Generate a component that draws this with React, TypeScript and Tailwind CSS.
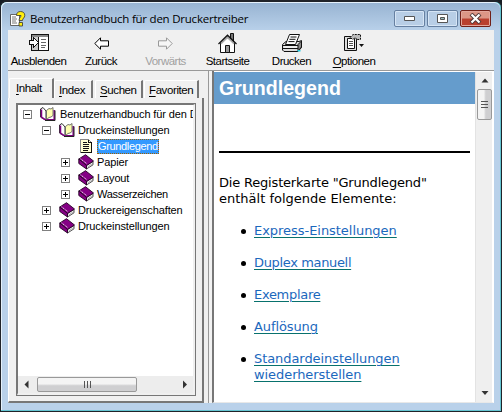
import React from "react";

const INK = "#111";

function HelpIcon() {
  return (
    <svg width="16" height="16" viewBox="0 0 16 16" className="shrink-0">
      <path d="M.5 3.500h9v11h-9z" fill="#fff" stroke="#666" />
      <path d="M2 6h4M2 8h5M2 10h4M2 12h5" stroke="#777" />
      <path d="M6.500 4.500C6.500 2 8 .5 10.500.5S14.800 2 14.800 4.300C14.800 7 12.500 7.200 12.500 9.500H9C9 7 11 6.200 11 4.500H6.500zM9 11.500h3.500v3.500H9z" fill="#ffee11" stroke="#333" strokeWidth=".8" />
    </svg>
  );
}

function HideIcon() {
  return (
    <svg width="20" height="18" viewBox="0 0 20 18" shapeRendering="crispEdges">
      <path d="M2.500 .5h17v16h-17z" fill="#fff" stroke={INK} />
      <path d="M3 1h16v2H3z" fill="#888" />
      <path d="M3 3h6v13H3z" fill="#ccc" />
      <path d="M9.500 3v14" stroke={INK} />
      <path d="M12 5.500h5M12 8.500h5M12 11.500h5M12 13.500h4" stroke="#666" />
      <path d="M.5 6.500h4v-3l5 5-5 5v-3h-4z" fill="#fff" stroke={INK} />
    </svg>
  );
}

function ArrowIcon({ flip, stroke, fill }: { flip?: boolean; stroke: string; fill: string }) {
  return (
    <svg width="15" height="13" viewBox="0 0 15 13" className={flip ? "-scale-x-100" : ""}>
      <path d="M.8 6.500 6.500 .8v3h8v5.400h-8v3z" fill={fill} stroke={stroke} />
    </svg>
  );
}

function HomeIcon() {
  return (
    <svg width="19" height="20" viewBox="0 0 19 20">
      <path d="M12.500 .5h3v8h-3z" fill="#777" stroke={INK} />
      <path d="M2.500 10 9.500 3l7 7v9.500h-14z" fill="#fff" stroke={INK} />
      <path d="M3 10.800 9.500 4.500l6.500 6.300" fill="none" stroke="#aaa" strokeWidth="1.500" />
      <path d="M.5 11 9.500 2l9 9" fill="none" stroke={INK} strokeWidth="1.200" />
      <path d="M7.500 12.500h4v7h-4z" fill="#999" stroke={INK} />
    </svg>
  );
}

function PrintIcon() {
  return (
    <svg width="20" height="19" viewBox="0 0 20 19">
      <path d="M.5 10.500 4 7.500h13l2.500-1v7L16 17.500H2L.5 16z" fill="#ddd" stroke={INK} />
      <path d="M16 10.500 19.500 7v6L16 17z" fill="#888" stroke={INK} />
      <path d="M3.500 10.500 7.500 .5h10l-4 10z" fill="#fff" stroke={INK} />
      <path d="M8.500 3h6M7.500 5.300h6M6.500 7.600h6" stroke={INK} />
      <path d="M1 11.500h15M1 14.500h15" stroke={INK} />
      <path d="M2 13h13" stroke="#fff" />
      <path d="M15.500 16h3v1.500h-3z" fill="#22cbe0" />
    </svg>
  );
}

function OptionsIcon() {
  return (
    <svg width="20" height="18" viewBox="0 0 20 18">
      <path d="M.5 2.500h12v14H.5z" fill="#ddd" stroke={INK} />
      <path d="M3.500 4.500h7v10h-7z" fill="#fff" stroke={INK} />
      <path d="M5 7.500h4M5 9.500h4M5 11.500h4" stroke="#555" />
      <path d="M6 3.500 9 .5h7.500v5H13l-2-2-2 2z" fill="#bbb" stroke={INK} strokeDasharray="2 1" />
      <path d="M15 10h5l-2.500 3z" fill={INK} />
    </svg>
  );
}

function OpenBook() {
  return (
    <svg width="16" height="14" viewBox="0 0 16 14" className="shrink-0">
      <path d="M.5 2 3 .5 6 4v9L2.500 11.500 .5 10z" fill="#fff" stroke="#333" />
      <path d="M1.500 2.500v7.500l4 2.800h8.700V3" fill="none" stroke="#800080" strokeWidth="1.500" />
      <path d="M6.500 3.500 9 1.500l2 .5 2-1.500v8l-2 1.500-2 .5-2.500 2z" fill="#ffffb0" stroke="#555" strokeWidth=".8" />
      <path d="M5 13.500h10v-10" fill="none" stroke="#222" />
    </svg>
  );
}

function ClosedBook() {
  return (
    <svg width="17" height="16" viewBox="0 0 17 16" className="shrink-0">
      <path d="M8.500 11.500 15 7.500v3.300L8.500 15z" fill="#fff" stroke="#222" strokeWidth=".8" />
      <path d="M.8 5 7.500 .7 15.500 7 8.500 11.500z" fill="#850085" stroke="#220022" strokeWidth=".9" />
      <path d="M.8 5v4.500l7.700 5.500v-3.500z" fill="#850085" stroke="#220022" strokeWidth=".9" />
      <path d="m2.500 4.800 6.500 5" stroke="#fff" strokeDasharray="1.200 .8" strokeWidth=".9" />
      <path d="m9.500 13 5.500-3.700" stroke="#888" strokeWidth=".7" />
    </svg>
  );
}

function PageIcon() {
  return (
    <svg width="12" height="14" viewBox="0 0 12 14" className="shrink-0" shapeRendering="crispEdges">
      <path d="M.5 .5h8l3 3v10H.5z" fill="#ffffd0" stroke="#888" />
      <path d="M11.500 3v10.500H.5M8.500 .5v3h3" fill="none" stroke={INK} />
      <path d="M3 3.500h4M3 5.500h6M3 7.500h6M3 9.500h6M3 11.500h5" stroke={INK} />
    </svg>
  );
}

function Toggle({ open }: { open?: boolean }) {
  return (
    <svg width="9" height="9" viewBox="0 0 9 9" className="shrink-0" shapeRendering="crispEdges">
      <path d="M.5 .5h8v8h-8z" fill="#fff" stroke="#808080" />
      <path d={open ? "M2 4.500h5" : "M2 4.500h5M4.500 2v5"} stroke="#000" />
    </svg>
  );
}

function Tool({ icon, children, className }: { icon: React.ReactNode; children: React.ReactNode; className: string }) {
  return (
    <div className={`flex shrink-0 flex-col items-center ${className}`}>
      <div className="flex h-[22px] items-center justify-center">{icon}</div>
      <div className="h-4 text-[11.5px] leading-[15px] tracking-[-0.5px] whitespace-nowrap">{children}</div>
    </div>
  );
}

function Tab({ first, rest, className }: { first: string; rest: string; className: string }) {
  return (
    <div className={`shrink-0 rounded-tl-xs border-t border-l border-t-white border-l-white border-r-[#777] text-[11.5px] tracking-[-0.4px] whitespace-nowrap ${className}`}>
      <span className="underline underline-offset-2">{first}</span>
      {rest}
    </div>
  );
}

function Row({ icon, label, indent, open, toggle = true }: { icon: React.ReactNode; label: React.ReactNode; indent: string; open?: boolean; toggle?: boolean }) {
  return (
    <div className={`flex h-4 items-center whitespace-nowrap ${indent}`}>
      {toggle && <Toggle open={open} />}
      <div className="mr-px ml-[6px] flex w-[20px] shrink-0 justify-center">{icon}</div>
      {label}
    </div>
  );
}

const LINK = "text-[#1b68bd] underline decoration-[#08716d] decoration-1 underline-offset-2";

function Item({ children, className }: { children: React.ReactNode; className?: string }) {
  return (
    <li className="flex items-start">
      <span className="mt-[6px] mr-[8px] ml-px size-[5px] shrink-0 rounded-full bg-black" />
      <span className={`${LINK} ${className ?? ""}`}>{children}</span>
    </li>
  );
}

export default function App() {
  return (
    <div className="h-[412px] w-[502px] overflow-hidden bg-[#151d24] font-['Liberation_Sans',Arial,sans-serif] text-black">
      <div className="h-[412px] w-[502px] rounded-t-[7px] border border-t-2 border-[#202329] bg-[#64c5d2] pr-px pb-px">
        <div className="flex h-[408px] w-[499px] flex-col rounded-t-[6px] border-t border-l border-[#e5f1fb] bg-[#b9d1ea] bg-linear-to-b from-[#98b4d2] to-[#b9d1ea] to-[28px] pr-[6px] pl-[6px]">
          <header className="flex h-[27px] shrink-0 items-start">
            <div className="mt-[8px] ml-[2px]"><HelpIcon /></div>
            <h1 className="mt-[8px] ml-[4px] w-[324px] shrink-0 font-['Open_Sans','Noto_Sans',sans-serif] text-[11.5px] leading-4 tracking-[-0.23px] whitespace-nowrap">Benutzerhandbuch für den Druckertreiber</h1>
            <div className="mt-[7px] ml-[40px] flex gap-[2px]">
              <div className="flex h-[17px] w-[31px] items-center justify-center rounded-xs border border-[#6680a1] bg-[#b8cee6] shadow-[inset_0_0_0_1px_#d6e5f5]">
                <svg width="12" height="6"><path d="M.5 .5h10v4H.5z" fill="#fff" stroke="#555" /></svg>
              </div>
              <div className="flex h-[17px] w-[31px] items-center justify-center rounded-xs border border-[#6680a1] bg-[#b8cee6] shadow-[inset_0_0_0_1px_#d6e5f5]">
                <svg width="11" height="9"><path d="M.5 .5h10v8H.5z" fill="#fff" stroke="#555" /><path d="M3.500 3.500h4v2h-4z" fill="#9bb" stroke="#555" /></svg>
              </div>
              <div className="flex h-[17px] w-[31px] items-center justify-center rounded-xs border border-[#702018] bg-linear-to-b from-[#dc9686] from-45% to-[#b9402f] to-55% shadow-[inset_0_0_0_1px_#e3a69b]">
                <svg width="13" height="11"><path d="m2 1 9 9M11 1l-9 9" stroke="#4d3535" strokeWidth="4" /><path d="m2.500 1.500 8 8M10.500 1.500l-8 8" stroke="#fff" strokeWidth="2.200" /></svg>
              </div>
            </div>
          </header>

          <main className="flex h-[373px] w-[486px] shrink-0 flex-col bg-[#f0f0f0]">
            <nav className="flex h-[41px] shrink-0 border-b border-[#999] pt-[2px]">
              <Tool className="w-[61px]" icon={<HideIcon />}>Ausblenden</Tool>
              <Tool className="w-[64px]" icon={<ArrowIcon stroke="#000" fill="#fff" />}>Zurück</Tool>
              <Tool className="w-[65px] text-[#a0a0a0]" icon={<ArrowIcon flip stroke="#999" fill="#f6f6f6" />}>Vorwärts</Tool>
              <Tool className="w-[59px]" icon={<HomeIcon />}>Startseite</Tool>
              <Tool className="w-[69px]" icon={<PrintIcon />}>Drucken</Tool>
              <Tool className="w-[56px]" icon={<OptionsIcon />}><u className="underline-offset-2">O</u>ptionen</Tool>
            </nav>

            <div className="flex h-[332px]">
              <aside className="flex w-[200px] shrink-0 flex-col pt-[7px]">
                <div className="flex h-[20px] shrink-0 items-end pl-px">
                  <Tab first="I" rest="nhalt" className="h-[20px] w-[45px] border-r-2 pl-[6px] leading-[18px]" />
                  <Tab first="I" rest="ndex" className="h-[18px] w-[39px] border-r-2 pl-[4px] leading-[19px]" />
                  <Tab first="S" rest="uchen" className="ml-[2px] h-[18px] w-[48px] border-r-2 pl-[4px] leading-[19px]" />
                  <Tab first="F" rest="avoriten" className="ml-px h-[18px] w-[55px] border-r-2 pl-[4px] leading-[19px]" />
                </div>
                <div className="h-[305px] w-[196px] border-r-2 border-b-2 border-l border-[#777] border-l-white pt-[5px] pl-[7px]">
                  <div className="h-[293px] w-[180px] border border-[#777] bg-white">
                    <div className="flex h-[291px] w-[178px] flex-col border border-r-2 border-b-2 border-[#777] border-r-[#f0f0f0] border-b-[#f0f0f0]">
                      <div className="h-[271px] overflow-hidden pt-px text-[11px] leading-4 tracking-[-0.12px]">
                        <Row open indent="pl-[5px]" icon={<OpenBook />} label={<span className="ml-px">Benutzerhandbuch für den Druckertreiber</span>} />
                        <Row open indent="pl-[24px]" icon={<OpenBook />} label="Druckeinstellungen" />
                        <Row toggle={false} indent="pl-[52px]" icon={<PageIcon />} label={<span className="h-[15px] bg-[#3399ff] px-px leading-[15px] tracking-[-0.35px] text-white outline-1 -outline-offset-1 outline-dotted outline-[#a06000]">Grundlegend</span>} />
                        <Row indent="pl-[43px]" icon={<ClosedBook />} label="Papier" />
                        <Row indent="pl-[43px]" icon={<ClosedBook />} label="Layout" />
                        <Row indent="pl-[43px]" icon={<ClosedBook />} label={<span className="tracking-[-0.3px]">Wasserzeichen</span>} />
                        <Row indent="pl-[24px]" icon={<ClosedBook />} label="Druckereigenschaften" />
                        <Row indent="pl-[24px]" icon={<ClosedBook />} label="Druckeinstellungen" />
                      </div>
                      <div className="flex h-[17px] items-center bg-[#ededed]">
                        <svg width="19" height="15"><path d="M10.500 3.500v8L6.500 7.500z" fill="#333" /></svg>
                        <div className="flex h-[15px] w-[100px] items-center justify-center gap-[2px] rounded-xs border border-[#999] bg-linear-to-b from-[#f4f4f4] from-45% to-[#cfcfd1] to-60%">
                          <i className="h-[7px] w-px bg-[#555]" /><i className="h-[7px] w-px bg-[#555]" /><i className="h-[7px] w-px bg-[#555]" />
                        </div>
                        <svg width="18" height="15" className="ml-auto"><path d="M8 3.500v8l4-4z" fill="#333" /></svg>
                      </div>
                    </div>
                  </div>
                </div>
              </aside>
              <div className="w-[4px] shrink-0 border-l border-[#999] bg-[#f2f2f2]" />
              <section className="flex w-[282px] border-r-2 border-b border-l-2 border-r-white border-b-[#e8e8e8] border-l-[#777] bg-white pt-px">
                <article className="w-[261px] shrink-0 font-['DejaVu_Sans',Verdana,sans-serif] text-[13px] leading-4">
                  <h2 className="h-[32px] bg-[#659ccc] pl-[5px] font-['Liberation_Sans',Arial,sans-serif] text-[19.6px] leading-[33px] font-bold text-white">Grundlegend</h2>
                  <hr className="mt-[47px] ml-[5px] w-[251px] border-t-2 border-black" />
                  <p className="mt-[22px] ml-[5px] whitespace-nowrap"><span className="tracking-[-0.19px]">Die Registerkarte "Grundlegend"</span><br />enthält folgende Elemente:</p>
                  <ul className="mt-4 ml-[26px] flex flex-col gap-4 whitespace-nowrap">
                    <Item className="tracking-[-0.04px]">Express-Einstellungen</Item>
                    <Item className="tracking-[-0.35px]">Duplex manuell</Item>
                    <Item className="tracking-[-0.3px]">Exemplare</Item>
                    <Item className="tracking-[-0.1px]">Auflösung</Item>
                    <Item className="tracking-[-0.07px]">Standardeinstellungen<br />wiederherstellen</Item>
                  </ul>
                </article>
                <div className="flex w-[17px] shrink-0 flex-col items-center border-l border-[#e3e3e3] bg-[#efefef]">
                  <svg width="15" height="17"><path d="M4.500 10.500h7L8 6.500z" fill="#333" /></svg>
                  <div className="flex h-[31px] w-[15px] flex-col items-center justify-center gap-[2px] rounded-xs border border-[#999] bg-linear-to-r from-[#f4f4f4] from-45% to-[#cfcfd1] to-60%">
                    <i className="h-px w-[7px] bg-[#555]" /><i className="h-px w-[7px] bg-[#555]" /><i className="h-px w-[7px] bg-[#555]" />
                  </div>
                  <svg width="15" height="17" className="mt-auto"><path d="M4.500 6h7L8 10z" fill="#333" /></svg>
                </div>
              </section>
            </div>
          </main>
        </div>
      </div>
    </div>
  );
}
